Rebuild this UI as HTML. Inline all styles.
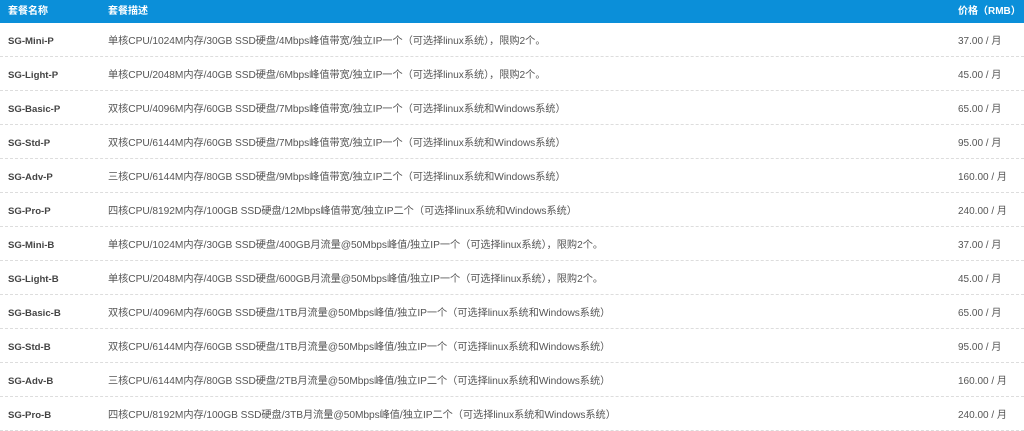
<!DOCTYPE html>
<html><head><meta charset="utf-8"><style>
body{margin:0;background:#fff;font-family:"Liberation Sans","Noto Sans CJK SC",sans-serif;font-size:10px;color:#555;overflow:hidden;width:1024px;height:427px}
.h{height:23px;background:#0b8fd9;color:#fff;font-weight:bold;position:relative}
.r{height:33px;border-bottom:1px dashed #ddd;position:relative}
.h span{position:absolute;top:0;line-height:23px;white-space:nowrap}
.r span{position:absolute;top:13px;line-height:12px;height:12px;white-space:nowrap;display:block}
.a{left:8px}.b{left:108px}.c{left:958px}
.r .a{font-weight:bold;color:#444;font-size:9.6px}
.r .b{font-size:10.2px;letter-spacing:-0.05px}
</style></head><body>
<div class="h"><span class="a">套餐名称</span><span class="b">套餐描述</span><span class="c">价格（RMB）</span></div>
<div class="r"><span class="a">SG-Mini-P</span><span class="b">单核CPU/1024M内存/30GB SSD硬盘/4Mbps峰值带宽/独立IP一个（可选择linux系统），限购2个。</span><span class="c">37.00 / 月</span></div>
<div class="r"><span class="a">SG-Light-P</span><span class="b">单核CPU/2048M内存/40GB SSD硬盘/6Mbps峰值带宽/独立IP一个（可选择linux系统），限购2个。</span><span class="c">45.00 / 月</span></div>
<div class="r"><span class="a">SG-Basic-P</span><span class="b">双核CPU/4096M内存/60GB SSD硬盘/7Mbps峰值带宽/独立IP一个（可选择linux系统和Windows系统）</span><span class="c">65.00 / 月</span></div>
<div class="r"><span class="a">SG-Std-P</span><span class="b">双核CPU/6144M内存/60GB SSD硬盘/7Mbps峰值带宽/独立IP一个（可选择linux系统和Windows系统）</span><span class="c">95.00 / 月</span></div>
<div class="r"><span class="a">SG-Adv-P</span><span class="b">三核CPU/6144M内存/80GB SSD硬盘/9Mbps峰值带宽/独立IP二个（可选择linux系统和Windows系统）</span><span class="c">160.00 / 月</span></div>
<div class="r"><span class="a">SG-Pro-P</span><span class="b">四核CPU/8192M内存/100GB SSD硬盘/12Mbps峰值带宽/独立IP二个（可选择linux系统和Windows系统）</span><span class="c">240.00 / 月</span></div>
<div class="r"><span class="a">SG-Mini-B</span><span class="b">单核CPU/1024M内存/30GB SSD硬盘/400GB月流量@50Mbps峰值/独立IP一个（可选择linux系统），限购2个。</span><span class="c">37.00 / 月</span></div>
<div class="r"><span class="a">SG-Light-B</span><span class="b">单核CPU/2048M内存/40GB SSD硬盘/600GB月流量@50Mbps峰值/独立IP一个（可选择linux系统），限购2个。</span><span class="c">45.00 / 月</span></div>
<div class="r"><span class="a">SG-Basic-B</span><span class="b">双核CPU/4096M内存/60GB SSD硬盘/1TB月流量@50Mbps峰值/独立IP一个（可选择linux系统和Windows系统）</span><span class="c">65.00 / 月</span></div>
<div class="r"><span class="a">SG-Std-B</span><span class="b">双核CPU/6144M内存/60GB SSD硬盘/1TB月流量@50Mbps峰值/独立IP一个（可选择linux系统和Windows系统）</span><span class="c">95.00 / 月</span></div>
<div class="r"><span class="a">SG-Adv-B</span><span class="b">三核CPU/6144M内存/80GB SSD硬盘/2TB月流量@50Mbps峰值/独立IP二个（可选择linux系统和Windows系统）</span><span class="c">160.00 / 月</span></div>
<div class="r"><span class="a">SG-Pro-B</span><span class="b">四核CPU/8192M内存/100GB SSD硬盘/3TB月流量@50Mbps峰值/独立IP二个（可选择linux系统和Windows系统）</span><span class="c">240.00 / 月</span></div>
</body></html>
